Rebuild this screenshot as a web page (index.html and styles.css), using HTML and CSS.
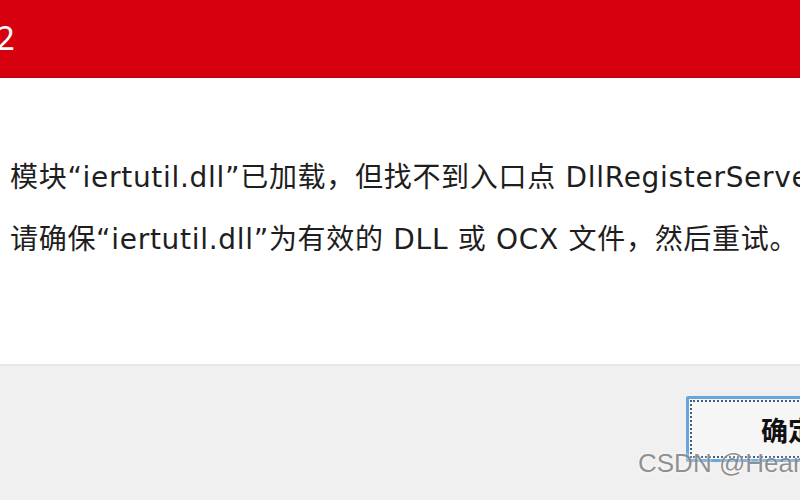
FILE: index.html
```html
<!DOCTYPE html>
<html lang="zh-CN">
<head>
    <meta charset="UTF-8">
    <title>RegSvr32</title>
    <link rel="stylesheet" href="styles.css">
</head>
<body>

    <div class="dialog">
        <div class="titlebar">
            <span class="title">2</span>
        </div>

        <div class="message">
            <p>模块“iertutil.dll”已加载，但找不到入口点 DllRegisterServer。</p>
            <p>请确保“iertutil.dll”为有效的 DLL 或 OCX 文件，然后重试。</p>
        </div>

        <div class="footer">
            <button class="ok">确定</button>
        </div>

        <div class="watermark">CSDN @HeartNote</div>
    </div>

</body>
</html>
```

FILE: styles.css
```css
body {
    margin: 0;
    width: 800px;
    height: 500px;
    overflow: hidden;
    font-family: 'DejaVu Sans', 'Noto Sans CJK SC', sans-serif;
    background: #ffffff;
}

.dialog {
    position: relative;
    display: flex;
    flex-direction: column;
    height: 500px;
}

.titlebar {
    height: 76px;
    background-color: #d6000f;
    border-bottom: 2px solid #c4000c;
    display: flex;
    align-items: center;
    overflow: hidden;
}

.title {
    color: #ffffff;
    font-family: 'Noto Sans', sans-serif;
    font-size: 33px;
    margin-left: -4px;
    margin-top: -2px;
}

.message {
    height: 286px;
    padding: 80px 0 0 10px;
    white-space: nowrap;
    overflow: hidden;
    box-sizing: border-box;
}

.message p {
    margin: 0 0 22px 0;
    font-size: 28px;
    line-height: 40px;
    letter-spacing: 0.7px;
    color: #1e1e1e;
}

.footer {
    flex: 1;
    background-color: #f0f0f0;
    border-top: 2px solid #e8e8e8;
    display: flex;
    justify-content: flex-start;
    padding: 30px 0 0 686px;
}

.ok {
    width: 160px;
    height: 66px;
    flex-shrink: 0;
    background-color: #f6f6f6;
    border: 3px solid #6aa6dc;
    border-radius: 2px;
    outline: 2px dotted #3c5f87;
    outline-offset: -6px;
    font-family: 'Noto Sans CJK SC', sans-serif;
    font-size: 27px;
    font-weight: bold;
    color: #111;
    text-align: left;
    padding-left: 72px;
}

.watermark {
    position: absolute;
    left: 638px;
    top: 448px;
    font-family: 'Liberation Sans', sans-serif;
    font-size: 26px;
    color: rgba(110, 110, 110, 0.75);
    text-shadow: 0 0 3px #ffffff;
    white-space: nowrap;
}
```
